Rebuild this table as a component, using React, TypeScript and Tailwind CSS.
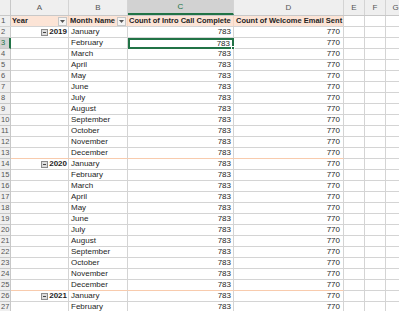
import React from 'react';

const months = [
  'January', 'February', 'March', 'April', 'May', 'June',
  'July', 'August', 'September', 'October', 'November', 'December',
];

type Row = { year?: string; month: string; groupEnd?: boolean };

const rows: Row[] = [];
['2019', '2020'].forEach((y) => {
  months.forEach((m, i) => rows.push({ year: i === 0 ? y : undefined, month: m, groupEnd: i === 11 }));
});
rows.push({ year: '2021', month: 'January' });
rows.push({ month: 'February' });

const cols = [
  { key: 'A', w: 'w-[58px]' },
  { key: 'B', w: 'w-[59px]' },
  { key: 'C', w: 'w-[106px]' },
  { key: 'D', w: 'w-[110px]' },
  { key: 'E', w: 'w-[21px]' },
  { key: 'F', w: 'w-[21px]' },
  { key: 'G', w: 'w-[20px]' },
];

function FilterBtn() {
  return (
    <span className="ml-auto flex h-[9px] w-[9px] shrink-0 items-center justify-center border border-[#c6c6c6] bg-[#f4f4f4]">
      <svg width="5" height="3" viewBox="0 0 5 3">
        <path d="M0 0h5L2.5 3z" fill="#555" />
      </svg>
    </span>
  );
}

function Collapse() {
  return (
    <span className="mr-[1px] inline-flex h-[7px] w-[7px] items-center justify-center border border-[#8c8c8c] bg-[#dcdcdc]">
      <span className="h-[1px] w-[3px] bg-[#444]" />
    </span>
  );
}

export default function App() {
  return (
    <div
      className="h-[311px] w-[399px] overflow-hidden bg-white text-[8px] text-[#1e1e1e]"
      style={{ fontFamily: '"Liberation Sans", Arial, sans-serif' }}
    >
      {/* Column headers */}
      <div className="flex h-[16px] border-b border-[#c8c8c8] bg-[#efefef] text-[#555]">
        <div className="w-[11px] shrink-0 border-r border-[#c8c8c8]" />
        {cols.map((c) => (
          <div
            key={c.key}
            className={`${c.w} flex shrink-0 items-center justify-center border-r border-[#d4d4d4] ${
              c.key === 'C' ? 'border-b-2 border-b-[#217346] bg-[#d2d2d2] text-[#217346]' : ''
            }`}
          >
            {c.key}
          </div>
        ))}
      </div>

      {/* Row 1: pivot header */}
      <div className="flex h-[11px] border-b border-[#d4d4d4]">
        <div className="flex w-[11px] shrink-0 items-center border-r border-[#c8c8c8] bg-[#efefef] pl-[1px] text-[#555]">1</div>
        <div className="flex w-[58px] shrink-0 items-center border-r border-[#f4d6c2] bg-[#fce4d6] pl-[1px] pr-[1px] text-[7.5px] font-bold">
          Year
          <FilterBtn />
        </div>
        <div className="flex w-[59px] shrink-0 items-center border-r border-[#f4d6c2] bg-[#fce4d6] pl-[1px] pr-[1px] text-[7.5px] font-bold">
          Month Name
          <FilterBtn />
        </div>
        <div className="flex w-[106px] shrink-0 items-center border-r border-[#f4d6c2] bg-[#fce4d6] pl-[1px] text-[7.5px] font-bold">
          Count of Intro Call Complete
        </div>
        <div className="flex w-[110px] shrink-0 items-center border-r border-[#d4d4d4] bg-[#fce4d6] pl-[2px] text-[7.5px] font-bold">
          Count of Welcome Email Sent
        </div>
        <div className="w-[21px] shrink-0 border-r border-[#d4d4d4]" />
        <div className="w-[21px] shrink-0 border-r border-[#d4d4d4]" />
        <div className="w-[20px] shrink-0" />
      </div>

      {rows.map((r, i) => {
        const n = i + 2;
        const sel = n === 3;
        return (
          <div key={n} className="flex h-[11px]">
            <div
              className={`flex w-[11px] shrink-0 items-center border-b border-r border-[#c8c8c8] pl-[1px] text-[7.5px] ${
                sel ? 'border-r-2 border-r-[#217346] bg-[#d2d2d2] text-[#217346]' : 'bg-[#efefef] text-[#555]'
              }`}
            >
              {n}
            </div>
            <div
              className={`flex w-[58px] shrink-0 items-center justify-end border-r border-[#d4d4d4] pr-[1px] font-bold ${
                r.groupEnd ? 'border-b border-b-[#f8cbad]' : 'border-b'
              }`}
            >
              {r.year && (
                <>
                  <Collapse />
                  {r.year}
                </>
              )}
            </div>
            <div
              className={`flex w-[59px] shrink-0 items-center border-r border-[#d4d4d4] pl-[2px] ${
                r.groupEnd ? 'border-b border-b-[#f8cbad]' : 'border-b'
              }`}
            >
              {r.month}
            </div>
            <div
              className={`relative flex w-[106px] shrink-0 items-center justify-end pr-[2px] ${
                sel
                  ? 'border-2 border-[#217346]'
                  : `border-r border-[#d4d4d4] ${r.groupEnd ? 'border-b border-b-[#f8cbad]' : 'border-b'}`
              }`}
            >
              783
              {sel && <span className="absolute -bottom-[3px] -right-[3px] h-[4px] w-[4px] border border-white bg-[#217346]" />}
            </div>
            <div
              className={`flex w-[110px] shrink-0 items-center justify-end border-r border-[#d4d4d4] pr-[3px] ${
                r.groupEnd ? 'border-b border-b-[#f8cbad]' : 'border-b'
              }`}
            >
              770
            </div>
            <div className="w-[21px] shrink-0 border-b border-r border-[#d4d4d4]" />
            <div className="w-[21px] shrink-0 border-b border-r border-[#d4d4d4]" />
            <div className="w-[20px] shrink-0 border-b border-[#d4d4d4]" />
          </div>
        );
      })}
    </div>
  );
}
